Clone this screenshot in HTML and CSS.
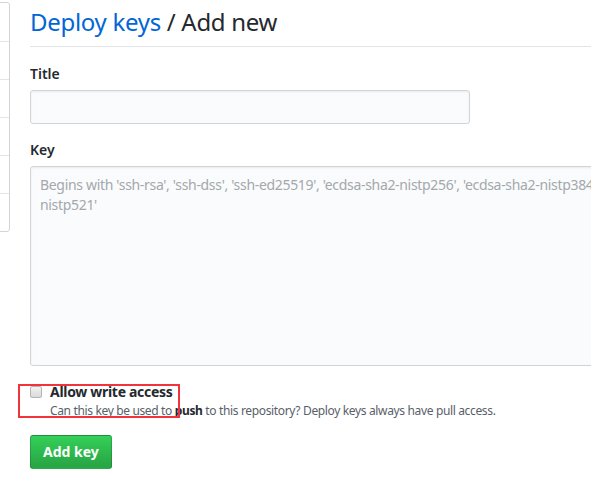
FILE: index.html
```html
<!DOCTYPE html>
<html lang="en">
<head>
<meta charset="utf-8">
<title>Deploy keys / Add new</title>
<link rel="stylesheet" href="styles.css">
</head>
<body>
<div class="layout">
  <nav class="menu">
    <div class="menu-item"></div>
    <div class="menu-item"></div>
    <div class="menu-item"></div>
    <div class="menu-item"></div>
    <div class="menu-item"></div>
    <div class="menu-item"></div>
  </nav>
  <main class="content">
    <div class="subhead">
      <h2 class="subhead-heading"><a class="crumb" href="#">Deploy keys</a> / Add new</h2>
    </div>
    <form class="form">
      <div class="form-group">
        <label class="label" for="title">Title</label>
        <input class="input input-title" id="title" type="text">
      </div>
      <div class="form-group">
        <label class="label" for="key">Key</label>
        <textarea class="input input-key" id="key" placeholder="Begins with 'ssh-rsa', 'ssh-dss', 'ssh-ed25519', 'ecdsa-sha2-nistp256', 'ecdsa-sha2-nistp384', or 'ecdsa-sha2-nistp521'"></textarea>
      </div>
      <div class="form-checkbox">
        <input class="checkbox" type="checkbox" id="write">
        <div class="check-text">
          <label class="check-label" for="write">Allow write access</label>
          <p class="note">Can this key be used to <strong>push</strong> to this repository? Deploy keys always have pull access.</p>
        </div>
        <span class="highlight"></span>
      </div>
      <button class="btn-primary" type="button">Add key</button>
    </form>
  </main>
</div>
</body>
</html>
```

FILE: styles.css
```css
html, body {
  margin: 0;
  padding: 0;
  background: #fff;
}
body {
  font-family: "Noto Sans", "Liberation Sans", sans-serif;
  font-size: 14px;
  line-height: 1.5;
  color: #24292e;
  overflow: hidden;
}
.layout {
  display: flex;
  align-items: flex-start;
  gap: 20px;
  width: 740px;
}
.menu {
  flex: 0 0 200px;
  margin-left: -190px;
  margin-top: 2px;
  border: 1px solid #d1d5da;
  border-radius: 3px;
  background: #fff;
  box-sizing: border-box;
}
.menu-item {
  height: 37px;
  border-top: 1px solid #e1e4e8;
}
.menu-item:first-child {
  border-top: 0;
  height: 38px;
}
.content {
  flex: 1 1 auto;
  min-width: 0;
}
.subhead {
  padding-top: 6px;
  padding-bottom: 8px;
  border-bottom: 1px solid #e1e4e8;
}
.subhead-heading {
  margin: 0;
  font-size: 24px;
  font-weight: 400;
  line-height: 32px;
  letter-spacing: -0.3px;
  color: #24292e;
}
.crumb {
  color: #0366d6;
  text-decoration: none;
}
.form {
  display: flex;
  flex-direction: column;
  align-items: flex-start;
}
.form-group {
  display: flex;
  flex-direction: column;
  margin-top: 16px;
  width: 100%;
}
.form-group:first-child {
  margin-top: 17px;
}
.label {
  font-weight: 600;
  line-height: 20px;
  margin-bottom: 6px;
}
.input {
  box-sizing: border-box;
  font-family: inherit;
  font-size: 14px;
  line-height: 20px;
  color: #24292e;
  background: #fafbfc;
  border: 1px solid #d1d5da;
  border-radius: 3px;
  box-shadow: inset 0 1px 2px rgba(27, 31, 35, 0.075);
  padding: 6px 8px;
  outline: none;
}
.input-title {
  width: 440px;
  height: 34px;
}
.input-key {
  width: 100%;
  height: 200px;
  padding: 8px 9px;
  resize: none;
  letter-spacing: -0.32px;
}
.input-key::placeholder {
  color: #a3a8ad;
}
.form-checkbox {
  position: relative;
  display: flex;
  align-items: flex-start;
  gap: 8px;
  margin-top: 16px;
}
.checkbox {
  appearance: none;
  -webkit-appearance: none;
  box-sizing: border-box;
  margin: 4px 0 0 0;
  width: 12px;
  height: 12px;
  border: 1px solid #b4b4b4;
  border-radius: 2px;
  background: linear-gradient(#f2f2f2, #dadada);
}
.check-label {
  display: block;
  font-weight: 700;
  line-height: 20px;
  letter-spacing: -0.3px;
}
.note {
  margin: 0;
  font-size: 12px;
  line-height: 17px;
  letter-spacing: -0.35px;
  color: #586069;
}
.note strong {
  color: #24292e;
}
.highlight {
  position: absolute;
  left: -12px;
  top: 2px;
  width: 158px;
  height: 30px;
  border: 2px solid #f1343c;
}
.btn-primary {
  margin-top: 16px;
  height: 34px;
  padding: 0 12px;
  font-family: inherit;
  font-size: 14px;
  font-weight: 700;
  line-height: 20px;
  color: #fff;
  background: linear-gradient(#34d058, #28a745 90%);
  border: 1px solid rgba(27, 31, 35, 0.2);
  border-radius: 3px;
}
```
